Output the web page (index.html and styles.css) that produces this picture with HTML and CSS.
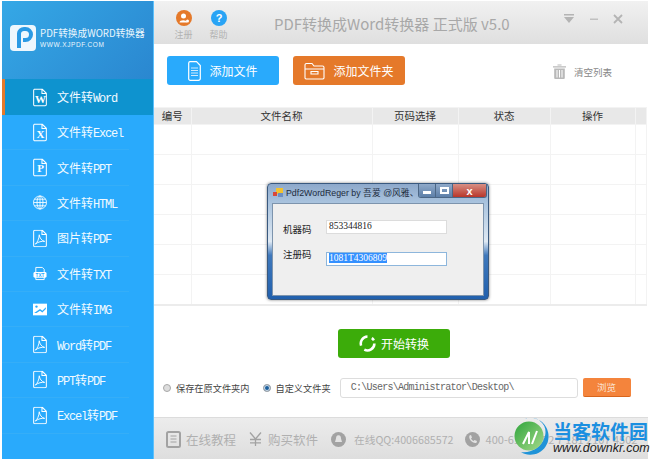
FILE: index.html
```html
<!DOCTYPE html>
<html lang="zh-CN">
<head>
    <meta charset="UTF-8">
    <meta name="viewport" content="width=device-width, initial-scale=1.0">
    <title>PDF转换成Word转换器</title>
    <link rel="stylesheet" href="styles.css">
</head>
<body>
<svg class="defs" width="0" height="0">
    <symbol id="page" viewBox="0 0 15 19">
        <path d="M1.5 .7H10L14.3 5V17A1.3 1.3 0 0 1 13 18.3H1.5A1.3 1.3 0 0 1 .7 17V2A1.3 1.3 0 0 1 1.5 .7ZM9.6 1V5.3H14" fill="none" stroke="#fff" stroke-width="1.1"/>
    </symbol>
    <symbol id="pdf" viewBox="0 0 15 19">
        <use href="#page"/>
        <path d="M2.5 15.5C4.5 14 6.500 10 6.700 5.500C7 9 9.500 12 12.500 12.600C9.500 12.200 5.500 13 2.500 15.500Z" fill="none" stroke="#fff"/>
    </symbol>
    <linearGradient id="leaf" x1="0" y1="0" x2="1" y2="1">
        <stop offset="0" stop-color="#2fa53c"/>
        <stop offset="1" stop-color="#a5d98a"/>
    </linearGradient>
</svg>

<div class="window">
    <aside class="side">
        <div class="logo">
            <svg class="logo-mark" viewBox="0 0 26 26" width="26" height="26">
                <rect width="26" height="26" rx="4" fill="#eef7fd"/>
                <path d="M9 23V8.500A5 5 0 0 1 14 4H15.500A5.500 5.500 0 0 1 15.500 15H13" fill="none" stroke="#2a9ae4" stroke-width="4"/>
            </svg>
            <div>
                <div class="logo-name">PDF转换成WORD转换器</div>
                <div class="logo-url">WWW.XJPDF.COM</div>
            </div>
        </div>
        <a class="nav-item active">
            <svg class="nav-icon" width="15" height="19"><use href="#page"/><text x="7.500" y="15" class="glyph">W</text></svg>
            <span>文件转<i>Word</i></span>
        </a>
        <a class="nav-item">
            <svg class="nav-icon" width="15" height="19"><use href="#page"/><text x="7.500" y="15" class="glyph">X</text></svg>
            <span>文件转<i>Excel</i></span>
        </a>
        <a class="nav-item">
            <svg class="nav-icon" width="15" height="19"><use href="#page"/><text x="7.500" y="14" class="glyph">P</text></svg>
            <span>文件转<i>PPT</i></span>
        </a>
        <a class="nav-item">
            <svg class="nav-icon" width="15" height="15" viewBox="0 0 15 15">
                <g fill="none" stroke="#fff" stroke-width=".9">
                    <circle cx="7.500" cy="7.500" r="7"/>
                    <ellipse cx="7.500" cy="7.500" rx="3.200" ry="7"/>
                    <path d="M7.500 .5V14.500M.5 7.500H14.500M1.500 4H13.500M1.500 11H13.500"/>
                </g>
            </svg>
            <span>文件转<i>HTML</i></span>
        </a>
        <a class="nav-item">
            <svg class="nav-icon" width="15" height="19"><use href="#pdf"/></svg>
            <span>图片转<i>PDF</i></span>
        </a>
        <a class="nav-item">
            <svg class="nav-icon" width="15" height="15" viewBox="0 0 15 15">
                <path d="M3 6V1H10L12 3V6M3 11V14H12V11" fill="none" stroke="#fff"/>
                <rect x=".5" y="6" width="14" height="6" rx="1.500" fill="#fff"/>
                <text x="7.500" y="11" class="glyph-small">TXT</text>
            </svg>
            <span>文件转<i>TXT</i></span>
        </a>
        <a class="nav-item">
            <svg class="nav-icon" width="15" height="13" viewBox="0 0 12 10">
                <path d="M0 0H12V10H0Z" fill="#fff"/>
                <circle cx="3" cy="2.500" r="1" fill="#29aafc"/>
                <path d="M1 8L6 4.500L8 6L11 3V4.500L8 7.500L6 6L3 8Z" fill="#29aafc"/>
            </svg>
            <span>文件转<i>IMG</i></span>
        </a>
        <a class="nav-item">
            <svg class="nav-icon" width="15" height="19"><use href="#pdf"/></svg>
            <span><i>Word</i>转<i>PDF</i></span>
        </a>
        <a class="nav-item">
            <svg class="nav-icon" width="15" height="19"><use href="#pdf"/></svg>
            <span><i>PPT</i>转<i>PDF</i></span>
        </a>
        <a class="nav-item">
            <svg class="nav-icon" width="15" height="19"><use href="#pdf"/></svg>
            <span><i>Excel</i>转<i>PDF</i></span>
        </a>
    </aside>

    <main class="main">
        <header class="top">
            <div class="top-link">
                <svg width="16" height="16" viewBox="0 0 16 16">
                    <circle cx="8" cy="8" r="8" fill="#e5792a"/>
                    <circle cx="7.500" cy="6" r="2.500" fill="#fff"/>
                    <path d="M3.500 12.500C3.500 9.500 11 9.500 11 12.500Z" fill="#fff"/>
                    <circle cx="11.500" cy="11" r="1.500" fill="#fff"/>
                </svg>
                <span>注册</span>
            </div>
            <div class="top-link">
                <svg width="16" height="16" viewBox="0 0 16 16">
                    <circle cx="8" cy="8" r="8" fill="#29a4f5"/>
                    <text x="8" y="12" class="glyph-help">?</text>
                </svg>
                <span>帮助</span>
            </div>
            <h1 class="title">PDF转换成Word转换器 正式版 v5.0</h1>
            <div class="win-controls">
                <svg width="12" height="10" viewBox="0 0 12 10"><path d="M1 0H11V1.500H1ZM1 3H11L6 9Z" fill="#b4b4b4"/></svg>
                <svg width="10" height="10" viewBox="0 0 10 10"><path d="M1 4.500H9V6H1Z" fill="#c0c0c0"/></svg>
                <svg width="10" height="10" viewBox="0 0 10 10"><path d="M1 1L9 9M9 1L1 9" stroke="#b4b4b4" stroke-width="1.800"/></svg>
            </div>
        </header>

        <div class="tools">
            <button class="btn btn-blue" type="button">
                <svg width="13" height="20" viewBox="0 0 13 20">
                    <path d="M2 .7H8.500L12.300 4.500V17.500A1.800 1.800 0 0 1 10.500 19.300H2A1.500 1.500 0 0 1 .7 17.500V2A1.500 1.500 0 0 1 2 .7Z" fill="none" stroke="#fff" stroke-width="1.200"/>
                    <path d="M3 7H10M3 9.500H10M3 12H10M3 14.500H10" stroke="#cfeafd"/>
                </svg>
                添加文件
            </button>
            <button class="btn btn-orange" type="button">
                <svg width="21" height="18" viewBox="0 0 21 18">
                    <path d="M1 16V3A1.500 1.500 0 0 1 2.500 1.500H8L10 4H18.500A1.500 1.500 0 0 1 20 5.500V16A1.500 1.500 0 0 1 18.500 17H2.500A1.500 1.500 0 0 1 1 16ZM1 7H20M7 9.500H14V12H7Z" fill="none" stroke="#fff" stroke-width="1.100"/>
                </svg>
                添加文件夹
            </button>
            <div class="clear-list">
                <svg width="13" height="15" viewBox="0 0 13 15">
                    <path d="M4.500 1.500V.5H8.500V1.500M0 2.200H13V3.500H0ZM1.200 4.500H11.800V14A1 1 0 0 1 10.800 15H2.200A1 1 0 0 1 1.200 14Z" fill="#b9b9b9"/>
                    <path d="M4 6V13.500M6.500 6V13.500M9 6V13.500" stroke="#fff"/>
                </svg>
                <span>清空列表</span>
            </div>
        </div>

        <table class="files">
            <thead>
                <tr><th>编号</th><th>文件名称</th><th>页码选择</th><th>状态</th><th>操作</th><th></th></tr>
            </thead>
            <tbody>
                <tr><td></td><td></td><td></td><td></td><td></td><td></td></tr>
                <tr><td></td><td></td><td></td><td></td><td></td><td></td></tr>
                <tr><td></td><td></td><td></td><td></td><td></td><td></td></tr>
                <tr><td></td><td></td><td></td><td></td><td></td><td></td></tr>
                <tr><td></td><td></td><td></td><td></td><td></td><td></td></tr>
                <tr><td></td><td></td><td></td><td></td><td></td><td></td></tr>
            </tbody>
        </table>

        <div class="start-row">
            <button class="btn-start" type="button">
                <svg width="17" height="17" viewBox="0 0 16 16">
                    <path d="M8 1.500A6.500 6.500 0 0 0 2 10M5 13.800A6.500 6.500 0 0 0 14.500 8M12 3A6.500 6.500 0 0 1 14 5" fill="none" stroke="#fff" stroke-width="2.400"/>
                </svg>
                开始转换
            </button>
        </div>

        <div class="save-row">
            <label class="radio"><span class="dot"></span>保存在原文件夹内</label>
            <label class="radio"><span class="dot on"></span>自定义文件夹</label>
            <div class="path">C:\Users\Administrator\Desktop\</div>
            <button class="btn-browse" type="button">浏览</button>
        </div>

        <footer class="foot">
            <span class="foot-item big">
                <svg width="15" height="17" viewBox="0 0 15 17">
                    <rect x="1" y="1" width="13" height="15" rx="1.500" fill="none" stroke="#a2a2a2" stroke-width="2"/>
                    <path d="M4.500 5H10.500M4.500 8H10.500M4.500 11H10.500" stroke="#a2a2a2"/>
                </svg>
                在线教程
            </span>
            <span class="foot-item big">
                <svg width="13" height="14" viewBox="0 0 13 14">
                    <path d="M1 .5L6.500 7L12 .5M6.500 7V14M1 7.500H12M1 10.800H12" fill="none" stroke="#a2a2a2" stroke-width="1.300"/>
                </svg>
                购买软件
            </span>
            <span class="foot-item qq">
                <svg width="15" height="15" viewBox="0 0 15 15">
                    <circle cx="7.500" cy="7.500" r="7.500" fill="#a2a2a2"/>
                    <path d="M7.500 3.200C5.500 3.200 5 5 5 6.500L4 10H11L10 6.500C10 5 9.500 3.200 7.500 3.200Z" fill="#e2e2e2"/>
                </svg>
                在线QQ:4006685572
            </span>
            <span class="foot-item">
                <svg width="15" height="15" viewBox="0 0 15 15">
                    <circle cx="7.500" cy="7.500" r="7.500" fill="#a2a2a2"/>
                    <path d="M4.500 3.500L6 3L7 5.500L6 6.500C6.500 7.500 7.500 8.500 8.500 9L9.500 8L12 9L11.500 10.800C8 12 3 7 4.500 3.500Z" fill="#e2e2e2"/>
                </svg>
                400-618-7552 7 181 2107 4502
            </span>
        </footer>
    </main>

    <!-- registration dialog sits over the list -->
    <div class="dialog">
        <div class="dialog-bar">
            <svg width="11" height="11" viewBox="0 0 11 11">
                <rect x="3" y="1" width="7" height="6" fill="#f2c230"/>
                <rect x="5" y="6" width="5" height="4" fill="#6c8fc4"/>
                <rect y="5" width="4" height="4" fill="#d9483a"/>
            </svg>
            <span class="dialog-title">Pdf2WordReger by 吾爱 @风雅、</span>
            <div class="dialog-btns">
                <span class="dbtn"><b class="bar"></b></span>
                <span class="dbtn"><b class="box"></b></span>
                <span class="dbtn close">x</span>
            </div>
        </div>
        <div class="dialog-body">
            <div class="dialog-row first">
                <label>机器码</label>
                <div class="code-input">853344816</div>
            </div>
            <div class="dialog-row second">
                <label>注册码</label>
                <div class="code-input focus"><em>1081T4306809</em></div>
            </div>
        </div>
    </div>

    <!-- site watermark -->
    <div class="mark">
        <svg width="36" height="38" viewBox="0 0 36 38">
            <path d="M9 1.500A18 18.500 0 1 1 7 34A22 22 0 0 0 31 18A15 15 0 0 0 9 1.500Z" fill="#1f93d8"/>
            <circle cx="15" cy="18" r="14.500" fill="url(#leaf)"/>
            <path d="M9 26L15 14V26M18 26L23 13" fill="none" stroke="#fff" stroke-width="2"/>
        </svg>
        <div>
            <div class="mark-name">当客软件园</div>
            <div class="mark-url">www.downkr.com</div>
        </div>
    </div>
</div>
</body>
</html>
```

FILE: styles.css
```css
* {
    box-sizing: border-box;
}

body {
    margin: 0;
    width: 650px;
    height: 462px;
    overflow: hidden;
    background: #fff;
    font-family: "Noto Sans CJK SC", "Liberation Sans", sans-serif;
}

.defs {
    display: block;
    height: 0;
}

.window {
    position: relative;
    display: flex;
    width: 646px;
    height: 458px;
    margin: 1px 2px 3px;
    background: #fff;
}

/* sidebar */
.side {
    flex: 0 0 152px;
    background: #29aafc;
    border-right: 1px solid #5cc0fb;
}

.logo {
    display: flex;
    align-items: center;
    gap: 4px;
    height: 78px;
    padding: 0 0 5px 8px;
    background: linear-gradient(135deg, #35a8e6, #2a87d0);
    color: #eaf6fd;
}

.logo-mark {
    flex: none;
}

.logo-name {
    font-size: 9.700px;
    line-height: 13px;
    white-space: nowrap;
}

.logo-url {
    font-family: "Liberation Sans", sans-serif;
    font-size: 6.500px;
    letter-spacing: .6px;
    line-height: 9px;
}

.nav-item {
    display: flex;
    align-items: center;
    height: 35.400px;
    margin: 0 24px 0 0;
    padding-left: 31px;
    color: #f2faff;
    font-size: 12px;
    border-bottom: 1px solid #35aef8;
}

.nav-item.active {
    height: 36px;
    margin-right: 0;
    padding-left: 28px;
    background: #0e93cf;
    border-bottom: 0;
    border-left: 3px solid #e5792a;
}

.nav-item span {
    white-space: nowrap;
}

.nav-item i {
    font-family: "Liberation Mono", monospace;
    font-size: 12px;
    font-style: normal;
    letter-spacing: -1.200px;
}

.nav-icon {
    flex: none;
    width: 14px;
    margin-right: 10px;
}

.glyph {
    fill: #fff;
    font-family: "Liberation Serif", serif;
    font-size: 11px;
    font-weight: bold;
    text-anchor: middle;
}

.glyph-small {
    fill: #29aafc;
    font-family: "Liberation Sans", sans-serif;
    font-size: 5px;
    font-weight: bold;
    text-anchor: middle;
}

.glyph-help {
    fill: #fff;
    font-family: "Liberation Sans", sans-serif;
    font-size: 11px;
    font-weight: bold;
    text-anchor: middle;
}

/* main column */
.main {
    flex: 1;
    display: flex;
    flex-direction: column;
    min-width: 0;
}

.top {
    display: flex;
    align-items: flex-start;
    height: 43px;
    padding: 9px 0 0 20px;
    background: linear-gradient(#f1f1f1, #dfdfdf);
}

.top-link {
    display: flex;
    flex-direction: column;
    align-items: center;
    width: 19px;
    margin-right: 16px;
    color: #b2b2b2;
    font-size: 9px;
    line-height: 12px;
}

.top-link span {
    margin-top: 3px;
    white-space: nowrap;
}

.title {
    margin: 3px 0 0 30px;
    color: #a8a8a8;
    font-size: 15px;
    font-weight: 400;
    line-height: 22px;
    white-space: nowrap;
}

.win-controls {
    display: flex;
    align-items: center;
    gap: 14px;
    margin: 4px 0 0 53px;
}

.tools {
    display: flex;
    align-items: flex-start;
    height: 63px;
    padding: 12px 0 0 13px;
}

.btn {
    display: flex;
    align-items: center;
    justify-content: center;
    gap: 8px;
    width: 112px;
    height: 29px;
    margin-right: 14px;
    padding: 0;
    border: 0;
    border-radius: 3px;
    color: #fff;
    font-family: inherit;
    font-size: 12px;
}

.btn-blue {
    background: #29aafc;
}

.btn-orange {
    background: #e5792a;
}

.clear-list {
    display: flex;
    align-items: center;
    gap: 8px;
    margin: 8px 0 0 134px;
    color: #888;
    font-size: 9.500px;
}

.files {
    width: 493px;
    border-collapse: collapse;
    table-layout: fixed;
    border-bottom: 2px solid #ececec;
}

.files thead {
    background: #f0f0f0;
}

.files th {
    height: 17px;
    padding: 0;
    background: #e8e8e8;
    border: 1px solid #f3f3f3;
    border-left: 0;
    color: #333;
    font-size: 10.500px;
    font-weight: 400;
    line-height: 14px;
}

.files th:nth-child(1), .files td:nth-child(1) { width: 37px; }
.files th:nth-child(2), .files td:nth-child(2) { width: 181px; }
.files th:nth-child(3), .files td:nth-child(3) { width: 86px; }
.files th:nth-child(4), .files td:nth-child(4) { width: 92px; }
.files th:nth-child(5), .files td:nth-child(5) { width: 85px; }

.files td {
    height: 30px;
    padding: 0;
    border-right: 1px solid #f3f3f3;
    border-bottom: 1px solid #f3f3f3;
}

.start-row {
    display: flex;
    justify-content: center;
    padding: 23px 0 0 0;
}

.btn-start {
    display: flex;
    align-items: center;
    justify-content: center;
    gap: 5px;
    width: 112px;
    height: 29px;
    margin-right: 14px;
    padding: 0;
    border: 0;
    border-radius: 3px;
    background: #3cac0a;
    color: #fff;
    font-family: inherit;
    font-size: 12px;
}

.save-row {
    display: flex;
    align-items: center;
    margin-top: 20px;
    padding-left: 9px;
    color: #444;
    font-size: 9.200px;
}

.radio {
    display: flex;
    align-items: center;
    gap: 5px;
    margin-right: 13px;
    white-space: nowrap;
}

.radio:nth-child(2) {
    margin-right: 9px;
}

.dot {
    width: 8px;
    height: 8px;
    border-radius: 50%;
    background: #ddd;
    border: 1px solid #a8a8a8;
}

.dot.on {
    background: #1c5f9c;
    box-shadow: inset 0 0 0 1px #cfe0ef;
}

.path {
    width: 238px;
    height: 20px;
    padding-left: 10px;
    border: 1px solid #ddd;
    border-radius: 3px;
    color: #666;
    font-family: "Liberation Mono", monospace;
    font-size: 10px;
    letter-spacing: -.740px;
    line-height: 17px;
}

.btn-browse {
    width: 48px;
    height: 19px;
    margin-left: 5px;
    padding: 0;
    border: 0;
    border-bottom: 1px solid #d8651c;
    border-radius: 2px;
    background: #f4843c;
    color: #fbe3d2;
    font-family: inherit;
    font-size: 9.500px;
}

.foot {
    display: flex;
    align-items: center;
    gap: 11px;
    height: 42px;
    margin-top: auto;
    padding: 1px 0 0 12px;
    overflow: hidden;
    background: linear-gradient(#ececec, #dedede);
    border-top: 1px solid #dcdcdc;
    color: #b0b0b0;
    font-size: 11px;
    white-space: nowrap;
}

.foot-item {
    display: flex;
    align-items: center;
    gap: 6px;
}

.foot-item.big {
    margin-right: 2px;
    font-size: 12.500px;
    gap: 5px;
}

.foot-item:nth-child(2) {
    gap: 6px;
}

.foot-item.qq {
    gap: 8px;
    font-size: 10.700px;
}

/* dialog */
.dialog {
    position: absolute;
    left: 265px;
    top: 182px;
    width: 222px;
    height: 117px;
    padding: 0 4px 4px;
    border: 1px solid #39597f;
    border-radius: 4px;
    background: linear-gradient(#8ea9cb 0, #a9c3de 16%, #dfe9f3 50%, #3f78bb 62%, #2160ad 100%);
    box-shadow: 0 0 3px rgba(0, 0, 0, .5);
}

.dialog-bar {
    display: flex;
    align-items: flex-start;
    gap: 2px;
    height: 19px;
    padding: 3px 0 0 1px;
}

.dialog-title {
    color: #1d2c3d;
    font-family: "Liberation Sans", "Noto Sans CJK SC", sans-serif;
    font-size: 8.800px;
    line-height: 13px;
    white-space: nowrap;
}

.dialog-btns {
    position: absolute;
    top: 0;
    right: 1px;
    display: flex;
    height: 14px;
    border: 1px solid #4c6786;
    border-top: 0;
    border-radius: 0 0 3px 3px;
    overflow: hidden;
}

.dbtn {
    display: flex;
    align-items: center;
    justify-content: center;
    width: 17px;
    background: linear-gradient(#8fa9c9, #5d7fa8);
    border-right: 1px solid #4c6786;
}

.bar {
    width: 8px;
    height: 3px;
    margin-top: 3px;
    background: #fff;
}

.box {
    width: 9px;
    height: 7px;
    border: 2px solid #fff;
}

.dbtn.close {
    width: 33px;
    background: linear-gradient(#d88f84, #b8362a);
    border-right: 0;
    color: #fff;
    font-family: "Liberation Sans", sans-serif;
    font-size: 11px;
    font-weight: bold;
    line-height: 10px;
}

.dialog-body {
    height: 93px;
    padding: 16px 0 0 10px;
    background: #efefef;
    border: 1px solid #7d94ad;
    color: #222;
    font-size: 9.500px;
}

.dialog-row {
    display: flex;
    align-items: flex-start;
    gap: 18px;
}

.dialog-row label {
    width: 25px;
    white-space: nowrap;
}

.dialog-row.first label {
    margin-top: 2px;
}

.dialog-row.second {
    margin-top: 16px;
}

.dialog-row.second label {
    margin-top: -5px;
}

.code-input {
    width: 121px;
    height: 14px;
    padding-left: 2px;
    background: #fff;
    border: 1px solid #dcdcdc;
    font-family: "Liberation Serif", serif;
    font-size: 9.500px;
    line-height: 11px;
}

.code-input.focus {
    border-color: #8db6dc;
}

.code-input em {
    background: #3390ff;
    color: #fff;
    font-style: normal;
}

/* watermark */
.mark {
    position: absolute;
    left: 512px;
    top: 417px;
    display: flex;
    align-items: center;
    gap: 3px;
}

.mark-name {
    color: #1b8fe0;
    font-size: 19px;
    font-weight: 700;
    line-height: 23px;
    white-space: nowrap;
}

.mark-url {
    color: #222;
    font-family: "Liberation Sans", sans-serif;
    font-size: 12.500px;
    font-style: italic;
    line-height: 13px;
    white-space: nowrap;
}
```
